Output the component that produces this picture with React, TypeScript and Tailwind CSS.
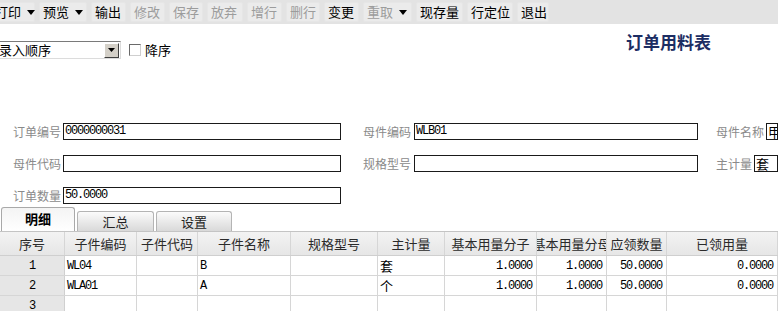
import React from 'react';

const CJK = "font-['Noto_Sans_CJK_SC',sans-serif]";
const MONO = "font-['Liberation_Mono','Noto_Sans_CJK_SC',monospace] tracking-[-1.2px]";

const tools = [
  { label: '打印', w: 44, arrow: true },
  { label: '预览', w: 48, arrow: true },
  { label: '输出', w: 35 },
  { label: '修改', w: 35, off: true },
  { label: '保存', w: 34, off: true },
  { label: '放弃', w: 36, off: true },
  { label: '增行', w: 35, off: true },
  { label: '删行', w: 34, off: true },
  { label: '变更', w: 35 },
  { label: '重取', w: 49, arrow: true, off: true },
  { label: '现存量', w: 47 },
  { label: '行定位', w: 46 },
  { label: '退出', w: 32 },
];

const cols = [
  { t: '序号', w: 65 },
  { t: '子件编码', w: 72 },
  { t: '子件代码', w: 61 },
  { t: '子件名称', w: 93 },
  { t: '规格型号', w: 87 },
  { t: '主计量', w: 67 },
  { t: '基本用量分子', w: 92 },
  { t: '基本用量分母', w: 70 },
  { t: '应领数量', w: 60 },
  { t: '已领用量', w: 111 },
];

const rows = [
  ['1', 'WL04', '', 'B', '', '套', '1.0000', '1.0000', '50.0000', '0.0000'],
  ['2', 'WLA01', '', 'A', '', '个', '1.0000', '1.0000', '50.0000', '0.0000'],
  ['3', '', '', '', '', '', '', '', '', ''],
];

const Arrow = () => (
  <svg width="8" height="5" viewBox="0 0 8 5" className="shrink-0">
    <path d="M0 0h8L4 5z" fill="#000" />
  </svg>
);

const Label = ({ children, className }: { children: React.ReactNode; className: string }) => (
  <div className={`text-[12px] leading-[17px] h-[17px] text-[#8a8a8a] whitespace-nowrap ${CJK} ${className}`}>{children}</div>
);

const Field = ({ w, value, cjk }: { w?: number; value?: string; cjk?: boolean }) => (
  <div
    className={`h-[17px] border border-[#1a1a1a] bg-white flex items-center pl-[1px] overflow-hidden whitespace-nowrap ${
      w ? '' : 'flex-1'
    }`}
    style={w ? { width: w } : undefined}
  >
    <span className={cjk ? `text-[13px] leading-[15px] ${CJK}` : `text-[12px] leading-[15px] ${MONO}`}>{value}</span>
  </div>
);

export default function App() {
  return (
    <div className={`w-[778px] h-[311px] overflow-hidden bg-white text-black ${CJK}`}>
      {/* toolbar */}
      <div className="h-[24px] bg-[#e3e3e3] flex items-center">
        <div className="flex items-center gap-[4px] ml-[-9px]">
          {tools.map((b) => (
            <div
              key={b.label}
              className="h-[20px] pl-[3px] flex items-center gap-[6px] bg-[#ebebeb] border border-[#e6e6e6] rounded-[2px] shrink-0"
              style={{ width: b.w }}
            >
              <span className={`text-[13px] leading-[16px] whitespace-nowrap ${b.off ? 'text-[#9c9c9c]' : 'text-black'}`}>
                {b.label}
              </span>
              {b.arrow && <Arrow />}
            </div>
          ))}
        </div>
      </div>

      {/* sort + title */}
      <div className="flex items-start h-[35px]">
        <div className="flex items-center mt-[17px] ml-[-3px]">
          <div className="w-[124px] h-[18px] flex border-t border-l border-[#7a7a7a] border-b border-r border-b-[#dcdcdc] border-r-[#dcdcdc] bg-white">
            <div className="flex-1 flex items-center pl-[1px] text-[13px] leading-[16px] whitespace-nowrap">录入顺序</div>
            <div className="w-[15px] h-[15px] mt-[0.5px] mr-[1px] bg-[#d4d0c8] border border-t-white border-l-white border-b-[#404040] border-r-[#404040] flex items-center justify-center">
              <svg width="7" height="4" viewBox="0 0 7 4">
                <path d="M0 0h7L3.5 4z" fill="#000" />
              </svg>
            </div>
          </div>
          <div className="w-[12px] h-[12px] ml-[8px] border border-[#6a6a6a] border-b-[#cfcfcf] border-r-[#cfcfcf] bg-white" />
          <span className="ml-[4px] text-[13px] leading-[16px]">降序</span>
        </div>
        <div className="ml-auto mr-[67px] mt-[9px] text-[17px] leading-[18px] font-bold text-[#1c2d63]">
          订单用料表
        </div>
      </div>

      {/* form */}
      <div className="mt-[64px] flex flex-col gap-[15px]">
        <div className="flex items-center h-[17px]">
          <Label className="pl-[13px] pr-[2px]">订单编号</Label>
          <Field w={278} value="0000000031" />
          <Label className="ml-[22px] pr-[3px]">母件编码</Label>
          <Field w={284} value="WLB01" />
          <Label className="ml-[18px] pr-[2px]">母件名称</Label>
          <Field value="甲" cjk />
        </div>
        <div className="flex items-center h-[17px]">
          <Label className="pl-[13px] pr-[2px]">母件代码</Label>
          <Field w={278} />
          <Label className="ml-[22px] pr-[3px]">规格型号</Label>
          <Field w={284} />
          <Label className="ml-[18px] pr-[2px]">主计量</Label>
          <Field value="套" cjk />
        </div>
        <div className="flex items-center h-[17px]">
          <Label className="pl-[13px] pr-[2px]">订单数量</Label>
          <Field w={278} value="50.0000" />
        </div>
      </div>

      {/* tabs */}
      <div className="mt-[3px] flex items-end h-[24px] pl-[1px] gap-[2px]">
        <div className="w-[74px] h-[24px] rounded-t-[3px] border border-b-0 border-[#a9a9a9] bg-gradient-to-b from-[#f4f4f4] to-white flex items-center justify-center pb-[2px]">
          <span className="text-[13px] font-bold leading-[16px]">明细</span>
        </div>
        <div className="w-[77px] h-[20px] rounded-t-[3px] border border-b-0 border-[#b4b4b4] bg-gradient-to-b from-[#fbfbfb] to-[#d9d9d9] flex items-center justify-center">
          <span className="text-[13px] leading-[16px] text-[#222]">汇总</span>
        </div>
        <div className="w-[76px] h-[20px] rounded-t-[3px] border border-b-0 border-[#b4b4b4] bg-gradient-to-b from-[#fbfbfb] to-[#d9d9d9] flex items-center justify-center">
          <span className="text-[13px] leading-[16px] text-[#222]">设置</span>
        </div>
      </div>

      {/* grid */}
      <div className="border-t border-[#c4c4c4]">
        <div className="flex h-[24px] bg-gradient-to-b from-[#f3f3f3] to-[#e6e6e6] border-b border-[#cfcfcf]">
          {cols.map((c) => (
            <div
              key={c.t}
              className="shrink-0 flex items-center justify-center overflow-hidden whitespace-nowrap border-r border-[#d6d6d6] text-[13px] leading-[16px] text-[#2a2a2a]"
              style={{ width: c.w }}
            >
              {c.t}
            </div>
          ))}
        </div>
        {rows.map((r, ri) => (
          <div key={ri} className="flex h-[20px] border-b border-[#d6d6d6]">
            {r.map((v, ci) => {
              const w = cols[ci].w;
              if (ci === 0)
                return (
                  <div
                    key={ci}
                    className={`shrink-0 bg-[#e6e6e6] border-r border-[#d0d0d0] flex items-center justify-center text-[12px] ${MONO}`}
                    style={{ width: w }}
                  >
                    {v}
                  </div>
                );
              const right = ci >= 6;
              const cjk = ci === 5;
              return (
                <div
                  key={ci}
                  className={`shrink-0 bg-white border-r border-[#d6d6d6] flex items-center overflow-hidden whitespace-nowrap ${
                    right ? 'justify-end pr-[4px]' : 'pl-[2px]'
                  } ${cjk ? 'text-[13px]' : `text-[12px] ${MONO}`}`}
                  style={{ width: w }}
                >
                  {v}
                </div>
              );
            })}
          </div>
        ))}
      </div>
    </div>
  );
}
